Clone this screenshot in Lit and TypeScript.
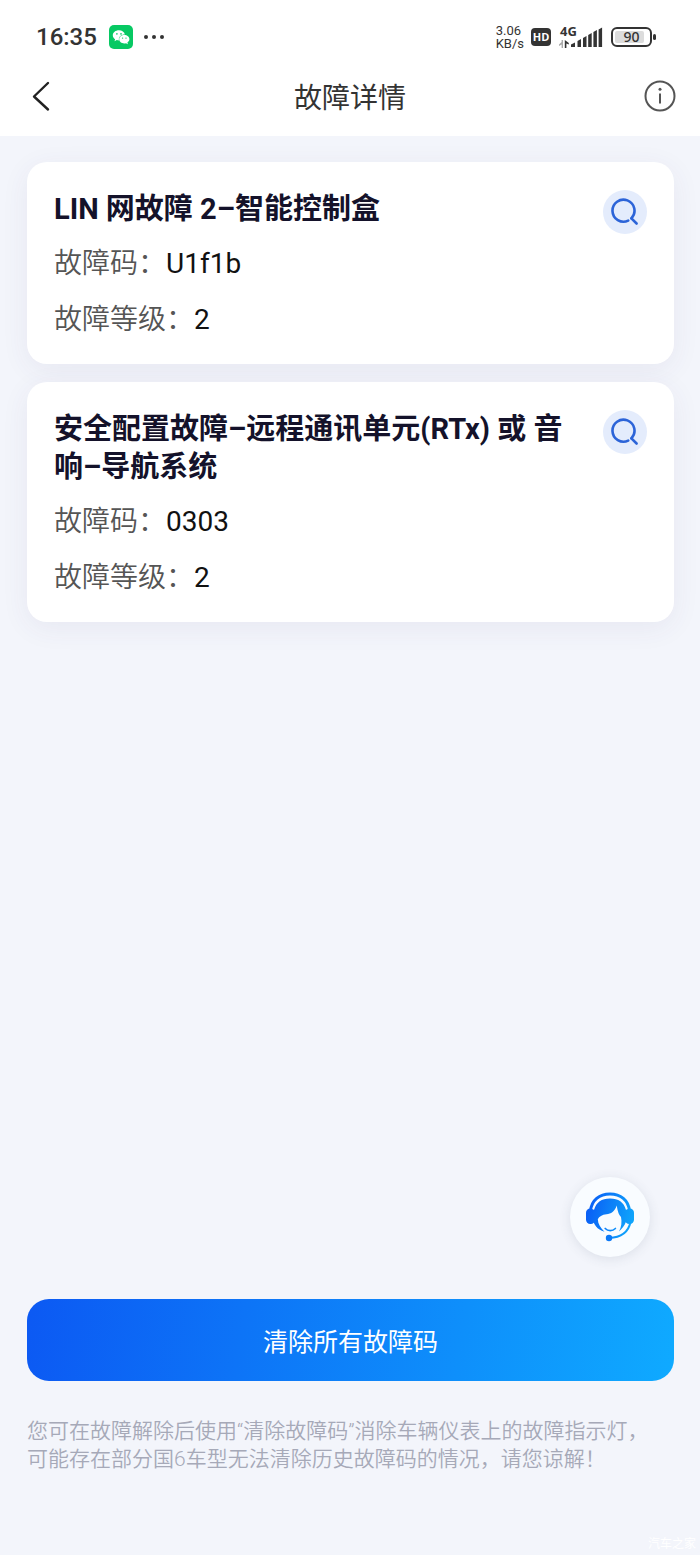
import { LitElement, html, css } from "lit";
import { customElement, property } from "lit/decorators.js";

interface Fault {
  name: string;
  code: string;
  level: string;
}

const FAULTS: Fault[] = [
  { name: "LIN 网故障 2–智能控制盒", code: "U1f1b", level: "2" },
  { name: "安全配置故障–远程通讯单元(RTx) 或 音响–导航系统", code: "0303", level: "2" },
];

@customElement("status-bar")
class StatusBar extends LitElement {
  static styles = css`
    :host {
      display: flex;
      align-items: center;
      height: 56px;
      padding: 18px 43px 0 36px;
      box-sizing: border-box;
      color: #333;
      font-family: Roboto, "Noto Sans CJK SC", sans-serif;
    }
    .time {
      font-size: 24px;
      line-height: 28px;
      font-weight: 500;
    }
    .wechat {
      margin-left: 12px;
    }
    .more {
      margin-left: 10px;
    }
    .speed {
      margin-left: auto;
      display: flex;
      flex-direction: column;
      font-size: 13px;
      line-height: 13px;
    }
    .hd {
      margin-left: 7px;
      width: 20px;
      height: 18px;
      border-radius: 4px;
      background: #333;
      color: #fff;
      font: 700 11px/18px "Open Sans", sans-serif;
      text-align: center;
    }
    .cell {
      margin-left: 8px;
    }
    .battery {
      margin-left: 8px;
    }
    svg {
      display: block;
    }
    .net {
      font: 700 13px "Open Sans", sans-serif;
    }
    .level {
      font: 500 14px "Noto Sans", sans-serif;
    }
  `;

  render() {
    return html`
      <span class="time">16:35</span>
      <svg class="wechat" width="24" height="24" viewBox="0 0 24 24">
        <rect width="24" height="24" rx="5" fill="#07c963" />
        <path
          fill="#fff"
          d="M10 5.2c-3.500 0-6.200 2.200-6.200 5.100 0 1.600.9 3 2.300 4l-.6 2 2.300-1.200c.7.200 1.400.300 2.200.300-.8-3.500 2-6 5.900-5.900C15.400 7 13 5.200 10 5.200z"
        />
        <path
          fill="#fff"
          d="M15.300 10.100c-2.900 0-5.100 1.900-5.100 4.200s2.200 4.200 5.100 4.200c.6 0 1.200-.1 1.700-.3l1.900 1-.5-1.700c1.200-.8 2-1.900 2-3.200 0-2.300-2.200-4.200-5.100-4.200z"
        />
        <g fill="#07c963">
          <circle cx="7.900" cy="8.900" r=".8" />
          <circle cx="12" cy="8.900" r=".8" />
          <circle cx="13.600" cy="13.100" r=".7" />
          <circle cx="17" cy="13.100" r=".7" />
        </g>
      </svg>
      <svg class="more" width="22" height="6" viewBox="0 0 22 6" fill="#333">
        <circle cx="3" cy="3" r="2" />
        <circle cx="11" cy="3" r="2" />
        <circle cx="19" cy="3" r="2" />
      </svg>
      <span class="speed"><span>3.06</span><span>KB/s</span></span>
      <span class="hd">HD</span>
      <svg class="cell" width="44" height="34" viewBox="0 -5 44 34" fill="#333">
        <text class="net" x="1" y="11">4G</text>
        <path d="M4 15v8H2.600v-3.500L0 21v-1.500L2.600 17V15z" fill="#aaa" />
        <path d="M5.800 23v-8l4 3v1.500L7.400 18.500V23z" />
        <path
          d="M12 22v-2.500l4-2V22zM18.500 22v-6l3.500-2v8zM24 22v-9l3.500-2v11zM29.200 22V10l3.500-2v14zM34.400 22V7l3.500-2v17zM39.600 22V4.500l3.500-2V22z"
        />
      </svg>
      <svg class="battery" width="46" height="20" viewBox="0 0 46 20">
        <rect x="1" y="1" width="39" height="18" rx="5" fill="#fff" stroke="#333" stroke-width="2" />
        <rect x="4" y="4" width="29" height="12" rx="2" fill="#dcdcdc" />
        <rect x="42" y="7" width="3" height="6" rx="1.500" fill="#333" />
        <text class="level" x="20.500" y="15" text-anchor="middle" fill="#333">90</text>
      </svg>
    `;
  }
}

@customElement("fault-card")
class FaultCard extends LitElement {
  @property({ attribute: false }) fault!: Fault;

  static styles = css`
    :host {
      display: block;
      padding: 28px 27px 24px;
      border-radius: 20px;
      background: #fff;
      box-shadow: 0 6px 28px rgba(70, 60, 120, 0.07);
    }
    .head {
      display: flex;
      align-items: flex-start;
      gap: 20px;
    }
    .name {
      flex: 1;
      margin: 0;
      font-size: 29px;
      line-height: 38px;
      font-weight: 700;
      color: #14122a;
    }
    .search {
      display: grid;
      place-items: center;
      width: 44px;
      height: 44px;
      margin-bottom: -6px;
      padding: 0;
      border: 0;
      border-radius: 50%;
      background: #e4ecfc;
    }
    .rows {
      display: grid;
      gap: 16px;
      margin: 16px 0 0;
    }
    .row {
      display: flex;
      font-size: 28px;
      line-height: 40px;
    }
    dt {
      color: #555;
      font-weight: 350;
    }
    dd {
      margin: 0;
      color: #111;
    }
  `;

  render() {
    return html`
      <div class="head">
        <h2 class="name">${this.fault.name}</h2>
        <button class="search" aria-label="查询">
          <svg
            width="28"
            height="28"
            viewBox="0 0 28 28"
            fill="none"
            stroke="#2c64d8"
            stroke-width="2.600"
            stroke-linecap="round"
          >
            <path d="M17.200 22.600A11 11 0 1 1 20.400 20.300" />
            <path d="M20.400 20.300l5.200 5.200" />
          </svg>
        </button>
      </div>
      <dl class="rows">
        <div class="row"><dt>故障码：</dt><dd>${this.fault.code}</dd></div>
        <div class="row"><dt>故障等级：</dt><dd>${this.fault.level}</dd></div>
      </dl>
    `;
  }
}

@customElement("app-root")
class AppRoot extends LitElement {
  static styles = css`
    :host {
      position: relative;
      display: flex;
      flex-direction: column;
      min-height: 100vh;
      background: #f3f5fb;
      font-family: Roboto, "Noto Sans CJK SC", sans-serif;
    }
    .top {
      background: #fff;
    }
    .nav {
      display: grid;
      grid-template-columns: 48px 1fr 48px;
      align-items: center;
      height: 80px;
      padding: 0 16px;
    }
    .title {
      margin: 0;
      padding-top: 6px;
      text-align: center;
      font-size: 28px;
      line-height: 40px;
      font-weight: 400;
      color: #333;
    }
    .icon {
      display: grid;
      place-items: center;
      height: 48px;
      padding: 0;
      border: 0;
      background: none;
    }
    .list {
      flex: 1;
      display: flex;
      flex-direction: column;
      gap: 18px;
      padding: 26px 26px 0 27px;
    }
    .actions {
      display: flex;
      flex-direction: column;
      padding: 40px 26px 82px 27px;
    }
    .service {
      align-self: flex-end;
      display: grid;
      place-items: center;
      width: 80px;
      height: 80px;
      margin: 0 24px 42px 0;
      padding: 0;
      border: 0;
      border-radius: 50%;
      background: #f9fcff;
      box-shadow: 0 2px 12px rgba(60, 70, 100, 0.12);
    }
    .clear {
      height: 82px;
      border: 0;
      border-radius: 22px;
      background: linear-gradient(98deg, #0c59f3, #0faaff);
      color: #fff;
      font-family: inherit;
      font-size: 25px;
    }
    .note {
      margin: 36px 0 0;
      padding-right: 16px;
      font-size: 21px;
      line-height: 28px;
      font-weight: 350;
      color: #a6a9b8;
    }
    .mark {
      position: absolute;
      right: 4px;
      bottom: 2px;
      font-size: 12px;
      line-height: 18px;
      color: #fff;
    }
  `;

  render() {
    return html`
      <header class="top">
        <status-bar></status-bar>
        <nav class="nav">
          <button class="icon" aria-label="返回">
            <svg width="20" height="32" viewBox="0 0 20 32" fill="none" stroke="#222" stroke-width="2.400" stroke-linecap="round" stroke-linejoin="round">
              <path d="M18 3L4 16.500 18 29.500" />
            </svg>
          </button>
          <h1 class="title">故障详情</h1>
          <button class="icon" aria-label="说明">
            <svg width="32" height="32" viewBox="0 0 32 32" fill="none" stroke="#555" stroke-width="2">
              <circle cx="16" cy="16" r="14.500" />
              <path d="M16 13.500v10" />
              <circle cx="16" cy="9.300" r="1.500" fill="#555" stroke="none" />
            </svg>
          </button>
        </nav>
      </header>
      <main class="list">
        ${FAULTS.map((fault) => html`<fault-card .fault=${fault}></fault-card>`)}
      </main>
      <footer class="actions">
        <button class="service" aria-label="在线客服">
          <svg width="54" height="54" viewBox="3 3 54 54">
            <defs>
              <linearGradient id="blue" gradientUnits="userSpaceOnUse" x1="6" y1="20" x2="54" y2="32">
                <stop offset="0" stop-color="#0a5cf5" />
                <stop offset="1" stop-color="#0fa6fb" />
              </linearGradient>
            </defs>
            <g fill="none" stroke="url(#blue)">
              <path d="M10.500 24C11.500 13 19.500 7 30 7S48.500 13 49.500 24" stroke-width="3" />
              <path d="M50.500 35C48.500 45 41 50.500 29 51" stroke-width="2" />
              <path d="M25.200 41.500c2.800 2.800 7.200 2.800 10.200 0" stroke-width="1.700" stroke-linecap="round" />
            </g>
            <path
              fill="url(#blue)"
              d="M12.800 24C14.500 15.500 21.500 10.500 30 10.500S45.500 15.500 47.200 24C48 32 45.500 39 39 44.500C41.500 40 42 35 41 30C39.500 28.500 37.500 25 36.800 18.500C34.800 24.500 31 26.800 26.500 27.300C22 27.800 19.200 29.500 17.800 32.300C18 37 20.500 41 24.500 44.800C17 42.500 13.500 37.500 13 32z"
            />
            <rect x="6" y="21.500" width="9" height="15.500" rx="4.200" fill="url(#blue)" />
            <rect x="45" y="21.500" width="9" height="15.500" rx="4.200" fill="url(#blue)" />
            <path d="M13.300 22.500C15.500 14.800 22 10.600 30 10.600S44.500 14.800 46.700 22.500" fill="none" stroke="#f9fcff" stroke-width="1.600" />
            <circle cx="29" cy="51" r="3.200" fill="#0b78f6" />
          </svg>
        </button>
        <button class="clear">清除所有故障码</button>
        <p class="note">
          您可在故障解除后使用“清除故障码”消除车辆仪表上的故障指示灯，可能存在部分国6车型无法清除历史故障码的情况，请您谅解！
        </p>
      </footer>
      <span class="mark">汽车之家</span>
    `;
  }
}
